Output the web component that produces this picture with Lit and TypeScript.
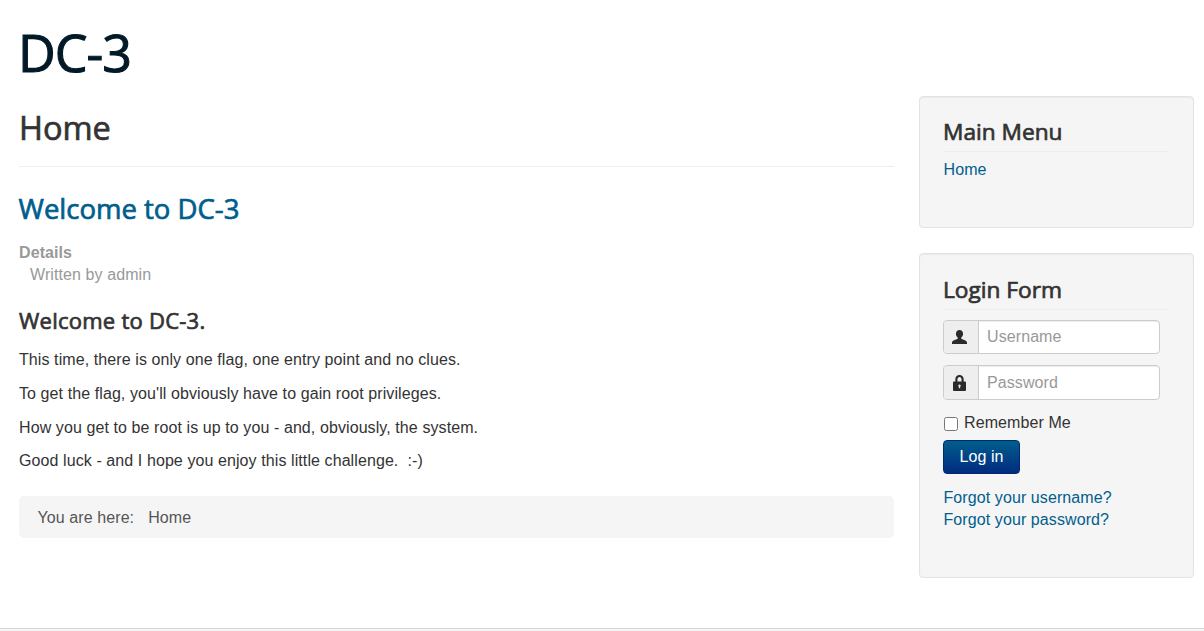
import { LitElement, html, css } from "lit";
import { customElement } from "lit/decorators.js";

@customElement("app-root")
export class AppRoot extends LitElement {
  static styles = css`
    :host {
      display: block;
      height: 631px;
      background: #fff;
      font-family: "Liberation Sans", Arial, sans-serif;
      font-size: 16px;
      line-height: 22px;
      letter-spacing: 0.09px;
      color: #333;
      overflow: hidden;
    }
    .page {
      box-sizing: border-box;
      height: 631px;
      padding: 0 10px 0 19px;
      display: flex;
      flex-direction: column;
    }
    .brand {
      margin: 0 0 0 -1px;
      height: 96px;
      padding-top: 22px;
      box-sizing: border-box;
      font: 400 52px/60px "Open Sans", sans-serif;
      -webkit-text-stroke: 1.1px #021a27;
      letter-spacing: -1px;
      color: #021a27;
    }
    .cols {
      flex: 1;
      display: flex;
      gap: 25px;
      align-items: flex-start;
    }
    main { width: 875px; }
    aside { width: 275px; display: flex; flex-direction: column; gap: 25px; }
    h1, h2, h3 {
      font-family: "Open Sans", sans-serif;
      font-weight: 400;
      margin: 0;
      letter-spacing: 0;
    }
    .page-title {
      font-size: 32.5px;
      line-height: 40px;
      margin-left: -0.5px;
      -webkit-text-stroke: 0.7px #333;
      padding: 12px 0 18px 0.5px;
      border-bottom: 1px solid #eee;
      color: #333;
    }
    .article-title {
      font-size: 27.5px;
      line-height: 32px;
      -webkit-text-stroke: 0.7px #005e8d;
      margin-top: 26px;
      margin-left: -0.5px;
      color: #005e8d;
    }
    .details { margin-top: 17px; color: #999; }
    .details dt { font-weight: 700; }
    .details dd { margin: 0; padding-left: 11px; }
    .details dl { margin: 0; }
    .lead {
      font-size: 22px;
      line-height: 26px;
      letter-spacing: 0.25px;
      margin-top: 21px;
      -webkit-text-stroke: 0.7px #333;
      color: #333;
    }
    p { margin: 12px 0 0; }
    .lead + p { margin-top: 16px; }
    p:last-of-type { margin-top: 11px; }
    .crumb {
      box-sizing: border-box;
      margin-top: 24px;
      background: #f5f5f5;
      border-radius: 5px;
      height: 42px;
      padding: 2px 18.5px 0;
      display: flex;
      align-items: center;
      color: #555;
    }
    .crumb span + span { margin-left: 14px; }
    .well {
      box-sizing: border-box;
      background: #f5f5f5;
      border: 1px solid #e3e3e3;
      border-radius: 4px;
      box-shadow: inset 0 1px 1px rgba(0, 0, 0, 0.05);
      padding: 19px 24px 19px 23px;
    }
    .well h3 {
      font-size: 22.7px;
      line-height: 32px;
      -webkit-text-stroke: 0.7px #333;
      padding-bottom: 3px;
      border-bottom: 1px solid #eee;
      color: #333;
    }
    a { color: #005e8d; text-decoration: none; }
    .menu { height: 132px; }
    .menu a { display: block; margin: 7px 0 0 0.5px; }
    .login { height: 325px; padding-top: 20px; }
    .group {
      display: flex;
      width: 217px;
      height: 34px;
      margin-top: 10px;
      box-sizing: border-box;
      border: 1px solid #ccc;
      border-radius: 4px;
      background: #fff;
      box-shadow: inset 0 1px 1px rgba(0, 0, 0, 0.075);
      overflow: hidden;
    }
    .group + .group { margin-top: 11px; height: 35px; }
    .add {
      box-sizing: border-box;
      width: 35px;
      padding-right: 3px;
      flex: none;
      background: #eee;
      border-right: 1px solid #ccc;
      display: flex;
      align-items: center;
      justify-content: center;
    }
    .add svg { display: block; fill: #2a2a2a; }
    .group input {
      flex: 1;
      min-width: 0;
      border: 0;
      outline: 0;
      padding: 0 8px;
      font: 16px "Liberation Sans", Arial, sans-serif;
      letter-spacing: 0.09px;
      color: #555;
      background: transparent;
    }
    .group input::placeholder { color: #999; opacity: 1; }
    .remember {
      display: flex;
      align-items: center;
      margin-top: 12px;
      height: 22px;
      color: #333;
    }
    .remember input { width: 14px; height: 14px; margin: 1px 6px 0 1px; background: #fff; }
    .btn {
      display: block;
      margin-top: 6px;
      width: 77px;
      height: 34px;
      padding: 0;
      border: 1px solid #002b6b;
      border-radius: 4px;
      background: linear-gradient(#005e8d, #002b80);
      color: #fff;
      font: 16px "Liberation Sans", Arial, sans-serif;
      letter-spacing: 0.09px;
    }
    .links { margin: 13px 0 0 0.5px; }
    .links a { display: block; }
    .rule {
      height: 3px;
      flex: none;
      margin: 0 -10px 0 -19px;
      border-top: 1px solid #d6d6d6;
      box-sizing: border-box;
      background: #f5f5f5;
    }
  `;

  render() {
    return html`
      <div class="page">
        <div class="brand">DC-3</div>
        <div class="cols">
          <main>
            <h1 class="page-title">Home</h1>
            <h2 class="article-title">Welcome to DC-3</h2>
            <div class="details">
              <dl>
                <dt>Details</dt>
                <dd>Written by admin</dd>
              </dl>
            </div>
            <h3 class="lead">Welcome to DC-3.</h3>
            <p>This time, there is only one flag, one entry point and no clues.</p>
            <p>To get the flag, you'll obviously have to gain root privileges.</p>
            <p>How you get to be root is up to you - and, obviously, the system.</p>
            <p>Good luck - and I hope you enjoy this little challenge.&nbsp; :-)</p>
            <div class="crumb"><span>You are here:</span><span>Home</span></div>
          </main>
          <aside>
            <section class="well menu">
              <h3>Main Menu</h3>
              <a href="#">Home</a>
            </section>
            <section class="well login">
              <h3>Login Form</h3>
              <div class="group">
                <span class="add">
                  <svg width="15" height="14" viewBox="0 0 14 14" preserveAspectRatio="none" aria-hidden="true">
                    <path d="M7 0c2 0 3.300 1.500 3.300 3.800 0 1.600-.7 3-1.600 3.700v1.300c.4.500 4.700 1.400 5.300 3.400V14H0v-1.800c.6-2 4.900-2.900 5.300-3.400V7.500C4.400 6.800 3.700 5.400 3.700 3.800 3.700 1.500 5 0 7 0z"/>
                  </svg>
                </span>
                <input type="text" placeholder="Username" />
              </div>
              <div class="group">
                <span class="add">
                  <svg width="13" height="16" viewBox="0 0 14 17" preserveAspectRatio="none" aria-hidden="true">
                    <path fill-rule="evenodd" d="M7 0c2.700 0 4.500 1.900 4.500 4.600V7H13c.6 0 1 .4 1 1v8c0 .6-.4 1-1 1H1c-.6 0-1-.4-1-1V8c0-.6.4-1 1-1h1.500V4.600C2.500 1.900 4.300 0 7 0zM7 2.200c-1.300 0-2.200 1-2.200 2.400V7h4.400V4.600c0-1.400-.9-2.400-2.200-2.400zM7 10a1.300 1.300 0 0 0-.7 2.400V14h1.400v-1.600A1.300 1.300 0 0 0 7 10z"/>
                  </svg>
                </span>
                <input type="password" placeholder="Password" />
              </div>
              <label class="remember"><input type="checkbox" />Remember Me</label>
              <button class="btn" type="button">Log in</button>
              <div class="links">
                <a href="#">Forgot your username?</a>
                <a href="#">Forgot your password?</a>
              </div>
            </section>
          </aside>
        </div>
        <div class="rule"></div>
      </div>
    `;
  }
}
